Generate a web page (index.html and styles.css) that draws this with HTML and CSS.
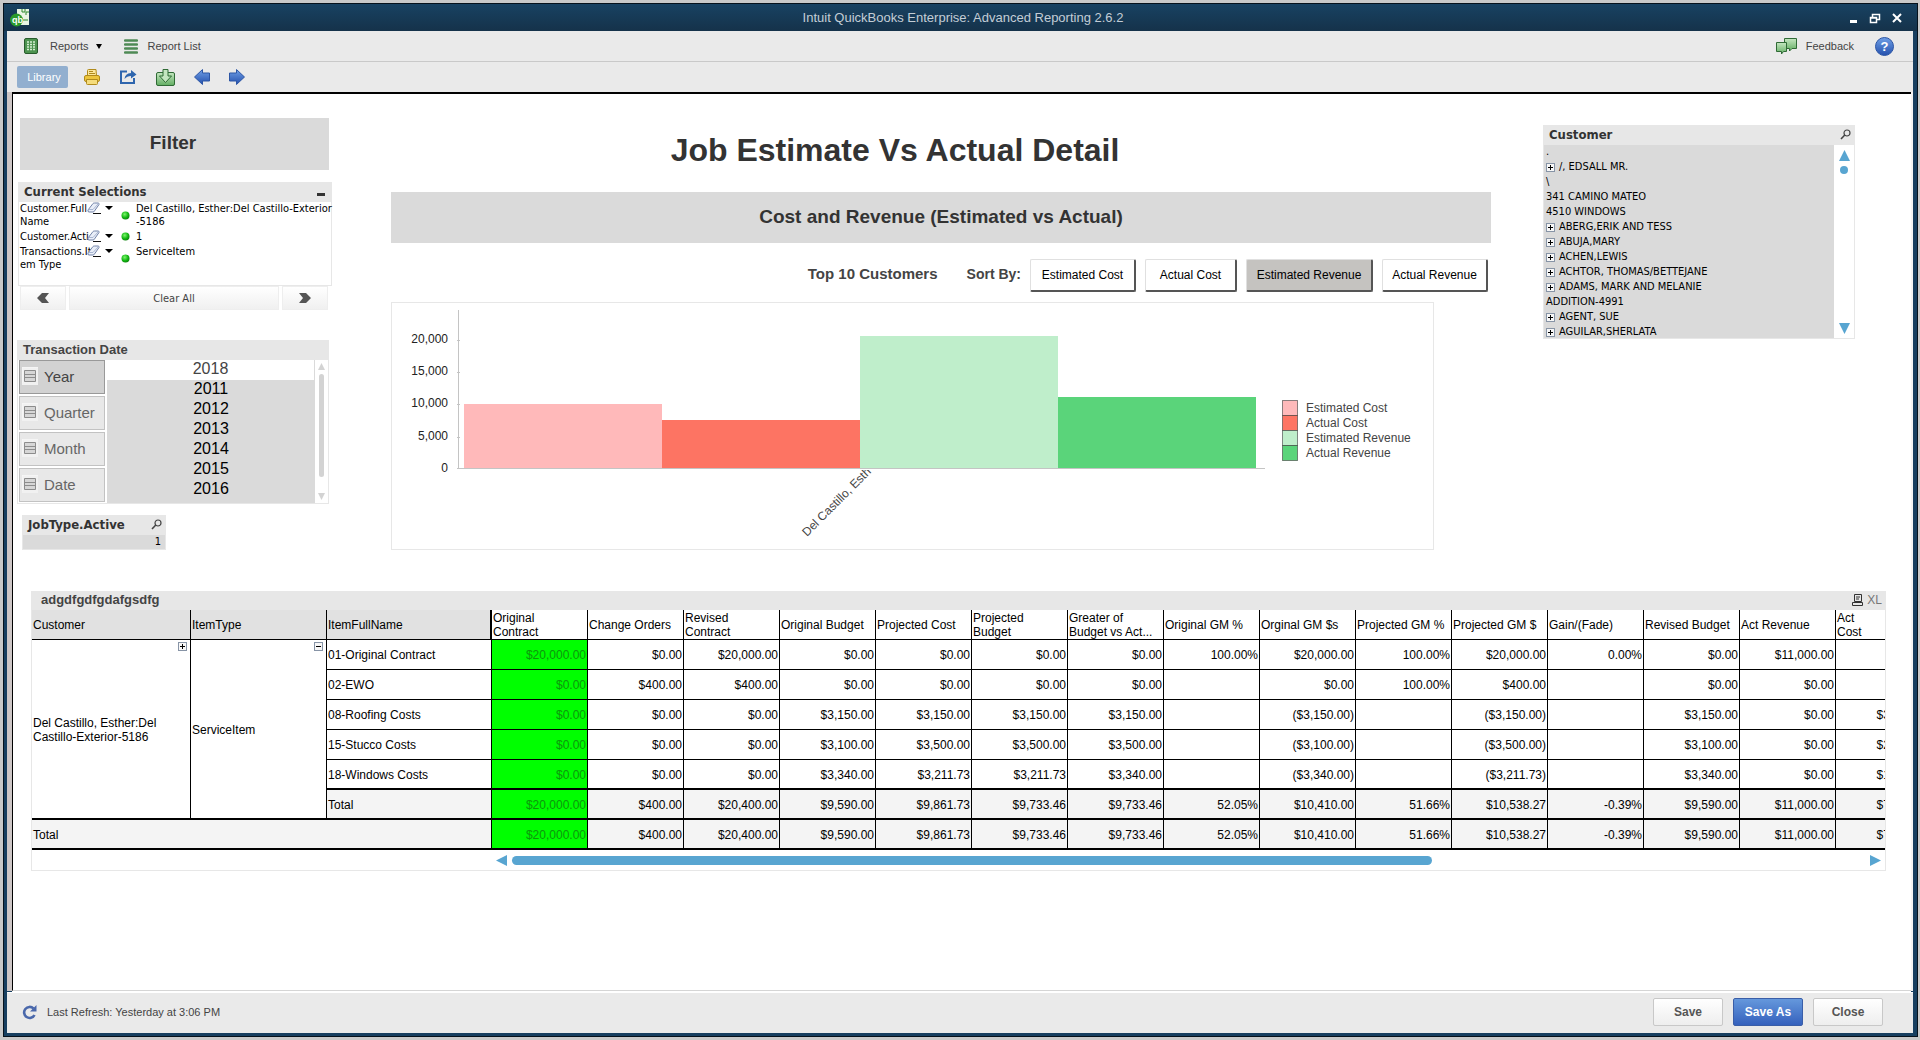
FILE: index.html
```html
<!DOCTYPE html>
<html lang="en">
<head>
    <meta charset="UTF-8">
    <meta name="viewport" content="width=device-width, initial-scale=1.0">
    <title>Intuit QuickBooks Enterprise: Advanced Reporting 2.6.2</title>
    <link rel="stylesheet" href="styles.css">
</head>
<body>
<!-- shared icons -->
<svg class="defs" width="0" height="0" aria-hidden="true">
    <defs>
        <linearGradient id="blue" x1="0" y1="0" x2="0" y2="1">
            <stop offset="0" stop-color="#6f9fe6"/><stop offset="1" stop-color="#2450ad"/>
        </linearGradient>
        <linearGradient id="green" x1="0" y1="0" x2="0" y2="1">
            <stop offset="0" stop-color="#c4e6c0"/><stop offset="1" stop-color="#62ad62"/>
        </linearGradient>
        <radialGradient id="dot" cx=".4" cy=".35" r=".7">
            <stop offset="0" stop-color="#7df56c"/><stop offset=".6" stop-color="#12b812"/><stop offset="1" stop-color="#0b7d0b"/>
        </radialGradient>
        <symbol id="eraser" viewBox="0 0 14 12">
            <path d="M1 8 6 1.5Q6.500 1 7.500 1H11Q12.500 1 12 2.500L7.500 9Q7 10 6 10H2Q.5 10 1 8Z" fill="#e9eef8" stroke="#7283a8"/>
            <path d="M1.500 7.500H6L11.500 1.500" fill="none" stroke="#a9b6d2"/>
            <path d="M6 11.500H14" stroke="#111"/>
        </symbol>
        <symbol id="plus" viewBox="0 0 9 9">
            <rect x=".5" y=".5" width="8" height="8" fill="#f7f7f7" stroke="#8794a6"/>
            <path d="M2 4.500H7M4.500 2V7" stroke="#000"/>
        </symbol>
        <symbol id="minus" viewBox="0 0 9 9">
            <rect x=".5" y=".5" width="8" height="8" fill="#f7f7f7" stroke="#8794a6"/>
            <path d="M2 4.500H7" stroke="#000"/>
        </symbol>
        <symbol id="search" viewBox="0 0 11 11">
            <circle cx="7" cy="4" r="3" fill="none" stroke="#444" stroke-width="1.200"/>
            <path d="M4.800 6 1 10" stroke="#444" stroke-width="1.600"/>
        </symbol>
        <symbol id="list" viewBox="0 0 16 18">
            <path d="M0 0H16V18H0Z" fill="#f1f1f1"/>
            <path d="M0 16V0H16" fill="none" stroke="#fafafa"/>
            <path d="M2.500 3.500H13.500V14.500H2.500ZM2.500 7.500H13.500M2.500 10.500H13.500" fill="#d6d6d6" stroke="#8c8c8c"/>
        </symbol>
    </defs>
</svg>

<div class="window">
    <header class="titlebar">
        <svg class="logo" width="20" height="19" viewBox="0 0 20 19">
            <path d="M7 1H19V17H7Z" fill="#e9f5e4"/>
            <path d="M12 1V4H15V1M19 4H16V7M13 12H18" fill="none" stroke="#2c8a2c"/>
            <circle cx="6.500" cy="12" r="6.500" fill="#2b9a2b"/>
            <text x="2" y="15" class="logo-text">qb</text>
        </svg>
        <div class="window-title">Intuit QuickBooks Enterprise: Advanced Reporting 2.6.2</div>
        <div class="window-buttons">
            <button aria-label="Minimize"><svg width="10" height="12"><path d="M1 9.500H8" stroke="#fff" stroke-width="3"/></svg></button>
            <button aria-label="Restore"><svg width="12" height="12"><path d="M3.500 5V2.500H10.500V7.500H8M3 2.500H11M1.500 5.500H7.500V10.500H1.500ZM1 6H8" fill="none" stroke="#fff" stroke-width="1.500"/></svg></button>
            <button aria-label="Close window"><svg width="12" height="12"><path d="M2 2 10 10M10 2 2 10" stroke="#fff" stroke-width="2"/></svg></button>
        </div>
    </header>

    <nav class="menubar">
        <a href="#" class="menu-reports">
            <svg width="14" height="16" viewBox="0 0 14 16">
                <rect x=".5" y=".5" width="13" height="15" rx="1.500" fill="#4d9350" stroke="#285c2c"/>
                <path d="M3 4H11M3 6.500H11M3 9H11M3 11.500H11" stroke="#d5efd2" stroke-width="1.500" stroke-dasharray="2 1"/>
            </svg>
            <span>Reports</span>
            <svg width="6" height="5"><path d="M0 0H6L3 5Z"/></svg>
        </a>
        <a href="#" class="menu-list">
            <svg width="14" height="15" viewBox="0 0 14 15"><path d="M1 1.500H13M1 5.500H13M1 9.500H13M1 13.500H13" stroke="#4f8a55" stroke-width="2.400" stroke-linecap="round"/></svg>
            <span>Report List</span>
        </a>
        <a href="#" class="menu-feedback">
            <svg width="21" height="17" viewBox="0 0 21 17">
                <path d="M8.500.5H20.500V10.500H16L13.500 13V10.500H8.500Z" fill="url(#green)" stroke="#2f6a35"/>
                <path d="M.5 4.500H10.500V13.500H7.500L5.500 16V13.500H.5Z" fill="url(#green)" stroke="#2f6a35"/>
            </svg>
            <span>Feedback</span>
        </a>
        <a href="#" class="menu-help" aria-label="Help">
            <svg width="19" height="19" viewBox="0 0 19 19">
                <circle cx="9.500" cy="9.500" r="9" fill="url(#blue)" stroke="#2d56a5"/>
                <text x="9.500" y="14" class="help-text">?</text>
            </svg>
        </a>
    </nav>

    <div class="toolbar">
        <button class="library">Library</button>
        <button aria-label="Print">
            <svg width="16" height="16" viewBox="0 0 16 16">
                <path d="M3.500 7V1.500Q3.500.5 4.500.5H12L12.500 7" fill="#fbe79a" stroke="#b08a1c"/>
                <path d="M5 2.500H9M5 4.500H11" stroke="#b08a1c"/>
                <rect x=".5" y="6.500" width="15" height="6" rx="1.500" fill="#ecc53c" stroke="#b08a1c"/>
                <path d="M2.500 10.500H13.500V14.500Q13.500 15.500 12.500 15.500H3.500Q2.500 15.500 2.500 14.500Z" fill="#f5dc7c" stroke="#b08a1c"/>
            </svg>
        </button>
        <button aria-label="Export">
            <svg width="18" height="16" viewBox="0 0 18 16">
                <path d="M8 2.500H2V14H15V9" fill="none" stroke="#2f66ae" stroke-width="2"/>
                <path d="M5.500 10Q6 4.500 12 4V1L17.500 5.500 12 9.500V7Q8 7 5.500 10Z" fill="#2f66ae"/>
            </svg>
        </button>
        <button aria-label="Download">
            <svg width="19" height="17" viewBox="0 0 19 17">
                <path d="M.5 5Q.5 3.500 2 3.500H17Q18.500 3.500 18.500 5V15Q18.500 16.500 17 16.500H2Q.5 16.500.5 15Z" fill="url(#green)" stroke="#2f6a35"/>
                <path d="M7 .5H12V7H15.500L9.500 13.500 3.500 7H7Z" fill="#c4e6c0" stroke="#2f6a35"/>
            </svg>
        </button>
        <button aria-label="Back">
            <svg width="16" height="16" viewBox="0 0 16 16"><path d="M.5 8 8.500.5V4H15.500V12H8.500V15.500Z" fill="url(#blue)" stroke="#2d56a5"/></svg>
        </button>
        <button aria-label="Forward">
            <svg width="16" height="16" viewBox="0 0 16 16"><path d="M15.500 8 7.500.5V4H.5V12H7.500V15.500Z" fill="url(#blue)" stroke="#2d56a5"/></svg>
        </button>
    </div>

    <main class="sheet">
        <div class="dashboard">
            <aside class="filters">
                <h2 class="banner filter-title">Filter</h2>

                <section class="panel selections">
                    <h3 class="panel-title">Current Selections <span class="minimize"></span></h3>
                    <ul>
                        <li>
                            <span class="field">Customer.Full<br>Name</span>
                            <svg class="eraser" width="14" height="12"><use href="#eraser"/></svg>
                            <svg class="caret" width="8" height="4"><path d="M0 0H8L4 4Z"/></svg>
                            <svg class="dot" width="9" height="9"><circle cx="4.500" cy="4.500" r="4" fill="url(#dot)"/></svg>
                            <span>Del Castillo, Esther:Del Castillo-Exterior<br>-5186</span>
                        </li>
                        <li>
                            <span class="field">Customer.Acti</span>
                            <svg class="eraser" width="14" height="12"><use href="#eraser"/></svg>
                            <svg class="caret" width="8" height="4"><path d="M0 0H8L4 4Z"/></svg>
                            <svg class="dot" width="9" height="9"><circle cx="4.500" cy="4.500" r="4" fill="url(#dot)"/></svg>
                            <span>1</span>
                        </li>
                        <li>
                            <span class="field">Transactions.It<br>em Type</span>
                            <svg class="eraser" width="14" height="12"><use href="#eraser"/></svg>
                            <svg class="caret" width="8" height="4"><path d="M0 0H8L4 4Z"/></svg>
                            <svg class="dot" width="9" height="9"><circle cx="4.500" cy="4.500" r="4" fill="url(#dot)"/></svg>
                            <span>ServiceItem</span>
                        </li>
                    </ul>
                </section>
                <div class="selection-nav">
                    <button aria-label="Previous selection"><svg width="12" height="10"><path d="M5 0H12L8 5 12 10H5L0 5Z" fill="#555"/></svg></button>
                    <button>Clear All</button>
                    <button aria-label="Next selection"><svg width="12" height="10"><path d="M7 0H0L4 5 0 10H7L12 5Z" fill="#555"/></svg></button>
                </div>

                <section class="panel dates">
                    <h3 class="panel-title">Transaction Date</h3>
                    <div class="dates-body">
                        <div class="periods">
                            <button class="active"><svg width="16" height="18"><use href="#list"/></svg>Year</button>
                            <button><svg width="16" height="18"><use href="#list"/></svg>Quarter</button>
                            <button><svg width="16" height="18"><use href="#list"/></svg>Month</button>
                            <button><svg width="16" height="18"><use href="#list"/></svg>Date</button>
                        </div>
                        <ul class="years">
                            <li class="possible">2018</li>
                            <li>2011</li>
                            <li>2012</li>
                            <li>2013</li>
                            <li>2014</li>
                            <li>2015</li>
                            <li>2016</li>
                        </ul>
                        <div class="vscroll grey">
                            <svg width="7" height="7"><path d="M0 7 3.500 0 7 7Z"/></svg>
                            <span class="thumb"></span>
                            <svg width="7" height="7"><path d="M0 0H7L3.500 7Z"/></svg>
                        </div>
                    </div>
                </section>

                <section class="panel jobtype">
                    <h3 class="panel-title">JobType.Active <svg width="11" height="11"><use href="#search"/></svg></h3>
                    <div class="jobtype-value">1</div>
                </section>
            </aside>

            <section class="report">
                <h1>Job Estimate Vs Actual Detail</h1>
                <h2 class="banner">Cost and Revenue (Estimated vs Actual)</h2>
                <div class="sort-row">
                    <strong class="top-label">Top 10 Customers</strong>
                    <strong class="sort-label">Sort By:</strong>
                    <button>Estimated Cost</button>
                    <button>Actual Cost</button>
                    <button class="active">Estimated Revenue</button>
                    <button>Actual Revenue</button>
                </div>
                <div class="chart">
                    <svg viewBox="0 0 1041 246">
                        <clipPath id="below"><path d="M300 167H700V246H300Z"/></clipPath>
                        <path d="M66.500 7V165.500H873" class="axis"/>
                        <path d="M65 37.500H68M65 69.500H68M65 101.500H68M65 134.500H68M65 165.500H68" class="axis"/>
                        <rect x="72" y="101" width="198" height="64" class="est-cost"/>
                        <rect x="270" y="117" width="198" height="48" class="act-cost"/>
                        <rect x="468" y="33" width="198" height="132" class="est-rev"/>
                        <rect x="666" y="94" width="198" height="71" class="act-rev"/>
                        <g class="ticks">
                            <text x="56" y="40">20,000</text>
                            <text x="56" y="72">15,000</text>
                            <text x="56" y="104">10,000</text>
                            <text x="56" y="137">5,000</text>
                            <text x="56" y="169">0</text>
                        </g>
                        <g clip-path="url(#below)">
                            <text class="category" transform="translate(415 234) rotate(-45)">Del Castillo, Esth</text>
                        </g>
                        <g class="swatches">
                            <rect x="890.500" y="97.500" width="15" height="15" class="est-cost"/>
                            <rect x="890.500" y="112.500" width="15" height="15" class="act-cost"/>
                            <rect x="890.500" y="127.500" width="15" height="15" class="est-rev"/>
                            <rect x="890.500" y="142.500" width="15" height="15" class="act-rev"/>
                        </g>
                        <g class="legend">
                            <text x="914" y="109">Estimated Cost</text>
                            <text x="914" y="124">Actual Cost</text>
                            <text x="914" y="139">Estimated Revenue</text>
                            <text x="914" y="154">Actual Revenue</text>
                        </g>
                    </svg>
                </div>
            </section>

            <section class="panel customers">
                <h3 class="panel-title">Customer <svg width="11" height="11"><use href="#search"/></svg></h3>
                <div class="customers-body">
                    <ul>
                        <li>.</li>
                        <li><svg width="9" height="9"><use href="#plus"/></svg>/, EDSALL MR.</li>
                        <li>\</li>
                        <li>341 CAMINO MATEO</li>
                        <li>4510 WINDOWS</li>
                        <li><svg width="9" height="9"><use href="#plus"/></svg>ABERG,ERIK AND TESS</li>
                        <li><svg width="9" height="9"><use href="#plus"/></svg>ABUJA,MARY</li>
                        <li><svg width="9" height="9"><use href="#plus"/></svg>ACHEN,LEWIS</li>
                        <li><svg width="9" height="9"><use href="#plus"/></svg>ACHTOR, THOMAS/BETTEJANE</li>
                        <li><svg width="9" height="9"><use href="#plus"/></svg>ADAMS, MARK AND MELANIE</li>
                        <li>ADDITION-4991</li>
                        <li><svg width="9" height="9"><use href="#plus"/></svg>AGENT, SUE</li>
                        <li><svg width="9" height="9"><use href="#plus"/></svg>AGUILAR,SHERLATA</li>
                    </ul>
                    <div class="vscroll">
                        <svg width="11" height="11"><path d="M0 11 5.500 0 11 11Z"/></svg>
                        <span class="thumb"></span>
                        <svg width="11" height="11"><path d="M0 0H11L5.500 11Z"/></svg>
                    </div>
                </div>
            </section>
        </div>

        <section class="panel detail">
            <h3 class="panel-title">adgdfgdfgdafgsdfg
                <span class="tools">
                    <svg width="11" height="12" viewBox="0 0 11 12"><path d="M2.500.5H9.500V7.500H2.500ZM4 3H8M4 5H7M.5 8.500H10.500V11.500H.5Z" fill="none" stroke="#333"/></svg>
                    <a href="#">XL</a>
                </span>
            </h3>
            <div class="table-wrap">
                <table>
                    <colgroup>
                        <col class="c-customer"><col class="c-type"><col class="c-item"><col span="15">
                    </colgroup>
                    <thead>
                        <tr>
                            <th class="dim">Customer</th>
                            <th class="dim">ItemType</th>
                            <th class="dim last">ItemFullName</th>
                            <th>Original<br>Contract</th>
                            <th>Change Orders</th>
                            <th>Revised<br>Contract</th>
                            <th>Original Budget</th>
                            <th>Projected Cost</th>
                            <th>Projected<br>Budget</th>
                            <th>Greater of<br>Budget vs Act...</th>
                            <th>Original GM %</th>
                            <th>Orginal GM $s</th>
                            <th>Projected GM %</th>
                            <th>Projected GM $</th>
                            <th>Gain/(Fade)</th>
                            <th>Revised Budget</th>
                            <th>Act Revenue</th>
                            <th>Act<br>Cost</th>
                        </tr>
                    </thead>
                    <tbody>
                        <tr>
                            <td class="name group" rowspan="6"><svg width="9" height="9"><use href="#plus"/></svg>Del Castillo, Esther:Del<br>Castillo-Exterior-5186</td>
                            <td class="name group" rowspan="6"><svg width="9" height="9"><use href="#minus"/></svg>ServiceItem</td>
                            <td class="name">01-Original Contract</td>
                            <td class="oc">$20,000.00</td><td>$0.00</td><td>$20,000.00</td><td>$0.00</td><td>$0.00</td>
                            <td>$0.00</td><td>$0.00</td><td>100.00%</td><td>$20,000.00</td><td>100.00%</td>
                            <td>$20,000.00</td><td>0.00%</td><td>$0.00</td><td>$11,000.00</td><td></td>
                        </tr>
                        <tr>
                            <td class="name">02-EWO</td>
                            <td class="oc">$0.00</td><td>$400.00</td><td>$400.00</td><td>$0.00</td><td>$0.00</td>
                            <td>$0.00</td><td>$0.00</td><td></td><td>$0.00</td><td>100.00%</td>
                            <td>$400.00</td><td></td><td>$0.00</td><td>$0.00</td><td></td>
                        </tr>
                        <tr>
                            <td class="name">08-Roofing Costs</td>
                            <td class="oc">$0.00</td><td>$0.00</td><td>$0.00</td><td>$3,150.00</td><td>$3,150.00</td>
                            <td>$3,150.00</td><td>$3,150.00</td><td></td><td>($3,150.00)</td><td></td>
                            <td>($3,150.00)</td><td></td><td>$3,150.00</td><td>$0.00</td><td>$3,150.00</td>
                        </tr>
                        <tr>
                            <td class="name">15-Stucco Costs</td>
                            <td class="oc">$0.00</td><td>$0.00</td><td>$0.00</td><td>$3,100.00</td><td>$3,500.00</td>
                            <td>$3,500.00</td><td>$3,500.00</td><td></td><td>($3,100.00)</td><td></td>
                            <td>($3,500.00)</td><td></td><td>$3,100.00</td><td>$0.00</td><td>$2,600.00</td>
                        </tr>
                        <tr class="thick">
                            <td class="name">18-Windows Costs</td>
                            <td class="oc">$0.00</td><td>$0.00</td><td>$0.00</td><td>$3,340.00</td><td>$3,211.73</td>
                            <td>$3,211.73</td><td>$3,340.00</td><td></td><td>($3,340.00)</td><td></td>
                            <td>($3,211.73)</td><td></td><td>$3,340.00</td><td>$0.00</td><td>$1,750.00</td>
                        </tr>
                        <tr class="thick total">
                            <td class="name">Total</td>
                            <td class="oc">$20,000.00</td><td>$400.00</td><td>$20,400.00</td><td>$9,590.00</td><td>$9,861.73</td>
                            <td>$9,733.46</td><td>$9,733.46</td><td>52.05%</td><td>$10,410.00</td><td>51.66%</td>
                            <td>$10,538.27</td><td>-0.39%</td><td>$9,590.00</td><td>$11,000.00</td><td>$7,500.00</td>
                        </tr>
                        <tr class="thick total">
                            <td class="name" colspan="3">Total</td>
                            <td class="oc">$20,000.00</td><td>$400.00</td><td>$20,400.00</td><td>$9,590.00</td><td>$9,861.73</td>
                            <td>$9,733.46</td><td>$9,733.46</td><td>52.05%</td><td>$10,410.00</td><td>51.66%</td>
                            <td>$10,538.27</td><td>-0.39%</td><td>$9,590.00</td><td>$11,000.00</td><td>$7,500.00</td>
                        </tr>
                    </tbody>
                </table>
            </div>
            <div class="hscroll">
                <svg width="11" height="11"><path d="M11 0V11L0 5.500Z"/></svg>
                <div class="track"><div class="thumb"></div></div>
                <svg width="11" height="11"><path d="M0 0V11L11 5.500Z"/></svg>
            </div>
        </section>
    </main>

    <footer class="statusbar">
        <svg width="15" height="15" viewBox="0 0 15 15">
            <path d="M11.500 3.500A5.500 5.500 0 1 0 12.500 10" fill="none" stroke="#4a68ab" stroke-width="2.600"/>
            <path d="M14.500 0V6.500H8Z" fill="#4a68ab"/>
        </svg>
        <span class="refresh">Last Refresh: Yesterday at 3:06 PM</span>
        <button>Save</button>
        <button class="primary">Save As</button>
        <button>Close</button>
    </footer>
</div>
</body>
</html>
```
FILE: styles.css
```css
* {
    box-sizing: border-box;
}
body {
    display: flow-root;
    margin: 0;
    background-color: #c9c9c9;
    font-family: "Liberation Sans", Arial, sans-serif;
    font-size: 12px;
    color: #000;
}
h1, h2, h3, ul {
    margin: 0;
    padding: 0;
}
ul {
    list-style: none;
}
button {
    font-family: inherit;
    font-size: 12px;
    padding: 0;
    border: 0;
    background: none;
}
a {
    color: inherit;
    text-decoration: none;
}
svg {
    display: block;
    flex: none;
}
.defs {
    position: absolute;
}

/* window frame */
.window {
    display: flex;
    flex-direction: column;
    min-height: calc(100vh - 6px);
    margin: 3px 2px 3px 3px;
    border: 1px solid #06121c;
    background-color: #173f60;
    padding: 0 4px 3px 3px;
}
.titlebar {
    display: flex;
    align-items: center;
    height: 27px;
    margin: 0 -4px 0 -3px;
    padding: 0 14px 0 6px;
    background: linear-gradient(#184262, #15324a);
}
.logo-text {
    font-size: 9px;
    font-weight: bold;
    fill: #fff;
}
.window-title {
    flex: 1;
    text-align: center;
    font-size: 13px;
    line-height: 20px;
    color: #c3cdd6;
    padding-left: 47px;
}
.window-buttons {
    display: flex;
    gap: 10px;
}

/* menus */
.menubar {
    display: flex;
    align-items: center;
    height: 31px;
    padding: 0 19px 0 17px;
    background-color: #eaeaea;
    border-bottom: 1px solid #c9c9c9;
    font-size: 11px;
    color: #444;
}
.menubar a {
    display: flex;
    align-items: center;
}
.menu-reports {
    gap: 7px;
}
.menu-reports span {
    margin-left: 5px;
}
.menu-list {
    gap: 10px;
    margin-left: 22px;
}
.menu-feedback {
    gap: 9px;
    margin-left: auto;
}
.menu-help {
    margin-left: 21px;
}
.help-text {
    font-size: 13px;
    font-weight: bold;
    fill: #fff;
    text-anchor: middle;
}
.toolbar {
    display: flex;
    align-items: center;
    gap: 19px;
    height: 30px;
    padding: 0 10px;
    background-color: #eaeaea;
}
.toolbar .library {
    width: 51px;
    height: 22px;
    margin-right: -3px;
    padding-left: 3px;
    border-radius: 2px;
    background-color: #92afcf;
    font-size: 11px;
    color: #fff;
}

/* sheet */
.sheet {
    flex: 1;
    display: flex;
    flex-direction: column;
    border-left: 1px solid #000;
    border-top: 2px solid #000;
    border-bottom: 1px solid #d5d5d5;
    box-shadow: -5px 0 #cdc6c6, 2px 0 #f4f4f4, 0 1px #fff;
    margin: 0 2px 1px 5px;
    padding: 24px 25px 24px 4px;
    background-color: #fff;
}
.dashboard {
    display: grid;
    grid-template-columns: 322px 1fr 312px;
    column-gap: 52px;
    align-items: start;
    margin-right: 31px;
    min-height: 432px;
}
.banner {
    padding-bottom: 2px;
    background-color: #dadada;
    color: #333;
    font-size: 19px;
    text-align: center;
    line-height: 49px;
}
.panel {
    border: 1px solid #e7e7e7;
    background-color: #fff;
}
.panel-title {
    display: flex;
    align-items: center;
    justify-content: space-between;
    height: 19px;
    padding: 0 3px 2px 5px;
    background-color: #e7e7e7;
    color: #333;
    font-family: "DejaVu Sans Condensed", "DejaVu Sans", Tahoma, sans-serif;
    font-size: 13px;
    line-height: 16px;
}

/* left column */
.filter-title {
    width: 309px;
    margin-left: 3px;
    padding-right: 3px;
    line-height: 50px;
}
.selections {
    width: 314px;
    height: 104px;
    margin: 12px 0 0 1px;
    font-family: "DejaVu Sans Condensed", "DejaVu Sans", Tahoma, sans-serif;
    font-size: 11px;
    line-height: 13px;
}
.minimize {
    width: 8px;
    height: 3px;
    margin: 6px 3px 0 0;
    background-color: #333;
}
.selections ul {
    display: flex;
    flex-direction: column;
    gap: 2px;
    padding: 0 1px;
}
.selections li {
    display: flex;
    white-space: nowrap;
}
.selections .field {
    flex: none;
    width: 67px;
}
.caret {
    margin: 4px 0 0 4px;
}
.dot {
    align-self: center;
    margin: 0 6px 0 8px;
}
.selection-nav {
    display: grid;
    grid-template-columns: 46px 1fr 46px;
    gap: 3px;
    width: 308px;
    margin-left: 3px;
}
.selection-nav button {
    display: flex;
    align-items: center;
    justify-content: center;
    height: 24px;
    background: linear-gradient(#fff, #f0f0f0);
    border: 1px solid #eee;
    color: #444;
    font-family: "DejaVu Sans Condensed", "DejaVu Sans", Tahoma, sans-serif;
    font-size: 11px;
}
.dates {
    width: 312px;
    margin-top: 30px;
}
.dates .panel-title {
    font-family: "Liberation Sans", Arial, sans-serif;
    color: #444;
}
.dates-body {
    display: flex;
    height: 143px;
}
.periods {
    display: flex;
    flex-direction: column;
    gap: 2px;
    width: 86px;
    margin-left: 1px;
}
.periods button {
    display: flex;
    align-items: center;
    gap: 6px;
    height: 34px;
    padding: 0 0 2px 2px;
    background-color: #e8e8e8;
    border: 1px solid #c2c2c2;
    color: #666;
    font-size: 15px;
}
.periods .active {
    background-color: #d2d2d2;
    border-color: #999;
    color: #444;
}
.years {
    flex: 1;
    margin-left: 2px;
    background-color: #dadada;
    font-size: 16px;
    line-height: 18px;
    text-align: center;
}
.years li {
    height: 20px;
}
.years .possible {
    background-color: #fff;
    border-right: 1px solid #dadada;
    color: #444;
}
.vscroll {
    display: flex;
    flex-direction: column;
    align-items: center;
    width: 20px;
    padding: 5px 0 4px;
    fill: #58a5d1;
}
.vscroll .thumb {
    width: 8px;
    height: 8px;
    margin: 5px 0 auto;
    border-radius: 4px;
    background-color: #58a5d1;
}
.vscroll.grey {
    width: 13px;
    padding: 3px 0;
    fill: #d3d3d3;
}
.vscroll.grey .thumb {
    width: 5px;
    height: 103px;
    margin-top: 4px;
    background-color: #d3d3d3;
}
.jobtype {
    width: 144px;
    margin: 11px 0 0 5px;
}
.jobtype-value {
    height: 14px;
    padding-right: 4px;
    background-color: #dadada;
    font-family: "DejaVu Sans Condensed", "DejaVu Sans", Tahoma, sans-serif;
    font-size: 11px;
    line-height: 14px;
    text-align: right;
}

/* report */
h1 {
    margin-top: 14px;
    padding-right: 92px;
    font-size: 32px;
    line-height: 36px;
    color: #333;
    text-align: center;
}
.report .banner {
    margin-top: 24px;
}
.sort-row {
    display: flex;
    align-items: center;
    justify-content: flex-end;
    gap: 9px;
    height: 35px;
    margin: 15px 3px 9px 0;
    color: #444;
}
.top-label, .sort-label {
    padding-bottom: 4px;
    font-size: 15px;
}
.top-label {
    margin-right: 20px;
}
.sort-label {
    font-size: 14px;
}
.sort-row button {
    width: 106px;
    height: 33px;
    background-color: #fff;
    border: 1px solid #e0e0e0;
    border-right: 2px solid #555;
    border-bottom: 2px solid #555;
    border-radius: 2px;
}
.sort-row button:nth-of-type(2) {
    width: 92px;
}
.sort-row .active {
    width: 127px;
    background-color: #c5c3c0;
}
.chart {
    margin-right: 57px;
    border: 1px solid #e7e7e7;
}
.chart svg {
    width: 100%;
}
.axis {
    fill: none;
    stroke: #c4c4c4;
}
.est-cost {
    fill: #ffb9ba;
}
.act-cost {
    fill: #fd7463;
}
.est-rev {
    fill: #bfeecb;
}
.act-rev {
    fill: #5ad47a;
}
.ticks {
    text-anchor: end;
    fill: #222;
}
.category, .legend {
    fill: #444;
}
.swatches {
    stroke: rgba(60, 60, 60, 0.6);
}

/* customers */
.customers {
    margin-top: 7px;
    font-family: "DejaVu Sans Condensed", "DejaVu Sans", Tahoma, sans-serif;
    font-size: 11px;
}
.customers-body {
    display: flex;
    height: 193px;
}
.customers ul {
    flex: 1;
    background-color: #dadada;
    line-height: 14px;
    overflow: hidden;
}
.customers li {
    display: flex;
    align-items: center;
    gap: 4px;
    height: 15px;
    padding: 0 0 1px 2px;
}

/* detail table */
.detail {
    margin: 41px 0 0 14px;
}
.detail .panel-title {
    height: 18px;
    padding: 0 3px 2px 9px;
    font-family: "Liberation Sans", Arial, sans-serif;
    color: #444;
}
.tools {
    display: flex;
    align-items: center;
    gap: 4px;
    font-size: 12px;
    font-weight: normal;
    color: #777;
}
.table-wrap {
    overflow: hidden;
}
table {
    table-layout: fixed;
    width: 1900px;
    border-spacing: 0;
}
.c-customer {
    width: 159px;
}
.c-type {
    width: 136px;
}
.c-item {
    width: 165px;
}
th, td {
    height: 30px;
    padding: 1px 1px 0 1px;
    border-right: 1px solid #000;
    border-bottom: 1px solid #000;
    font-weight: normal;
    line-height: 14px;
    text-align: right;
    white-space: nowrap;
}
th {
    text-align: left;
}
.dim {
    background-color: #e1e1e1;
}
.last {
    border-right-width: 2px;
}
.name {
    text-align: left;
}
.group {
    position: relative;
    border-bottom-width: 2px;
}
.group svg {
    position: absolute;
    top: 2px;
    right: 3px;
}
.thick td {
    border-bottom-width: 2px;
}
.total td {
    background-color: #f4f4f4;
}
td.oc, .total td.oc {
    background-color: #0f0;
    color: #0d970d;
}
.hscroll {
    display: flex;
    align-items: center;
    gap: 5px;
    height: 20px;
    padding: 0 4px 0 464px;
    fill: #58a5d1;
}
.track {
    flex: 1;
}
.track .thumb {
    width: 68%;
    height: 9px;
    border-radius: 5px;
    background-color: #58a5d1;
}

/* footer */
.statusbar {
    display: flex;
    align-items: center;
    gap: 10px;
    height: 41px;
    padding: 0 30px 2px 15px;
    background-color: #eaeaea;
    border-top: 1px solid #fff;
    color: #444;
}
.refresh {
    flex: 1;
    font-size: 11px;
}
.statusbar button {
    width: 70px;
    height: 28px;
    background: linear-gradient(#fff, #eee);
    border: 1px solid #c8c8c8;
    border-radius: 2px;
    font-weight: bold;
    color: #555;
}
.statusbar .primary {
    background: linear-gradient(#6598dc, #3561bd);
    border-color: #3a5ea8;
    color: #fff;
}
```
